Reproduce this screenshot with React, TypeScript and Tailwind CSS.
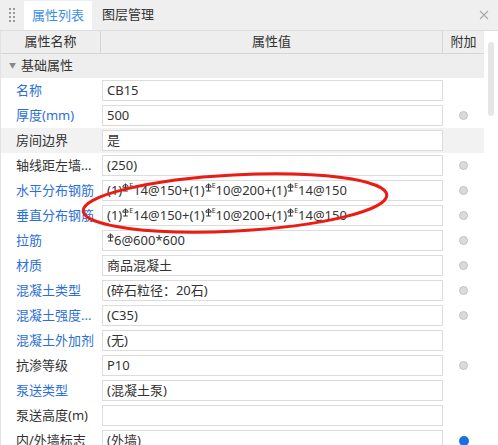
import React from 'react';

type Row = {
  name: string;
  value: React.ReactNode;
  blue?: boolean;
  dot?: 'gray' | 'blue';
  shaded?: boolean;
};

// 三级钢筋符号 (Φ with bar) + E
const Rebar: React.FC<{ e?: boolean }> = ({ e = true }) => (
  <span className="relative -top-[4px] inline-flex items-start">
    <svg width="7" height="9" viewBox="0 0 7 9" className="mt-[1px]">
      <line x1="3.5" y1="0.5" x2="3.5" y2="8" stroke="#333" strokeWidth="1" />
      <path d="M0.8 4.2 A2.7 2.6 0 0 1 6.2 4.2" fill="none" stroke="#333" strokeWidth="1" />
      <line x1="0.8" y1="4.2" x2="6.2" y2="4.2" stroke="#333" strokeWidth="1" />
      <line x1="1.2" y1="8" x2="5.8" y2="8" stroke="#333" strokeWidth="1" />
    </svg>
    {e && <span className="text-[7px] leading-[8px]">E</span>}
  </span>
);

const steel = (
  <>
    (1)<Rebar />14@150+(1)<Rebar />10@200+(1)<Rebar />14@150
  </>
);

const rows: Row[] = [
  { name: '名称', value: 'CB15', blue: true },
  { name: '厚度(mm)', value: '500', blue: true, dot: 'gray' },
  { name: '房间边界', value: '是', shaded: true },
  { name: '轴线距左墙...', value: '(250)', dot: 'gray' },
  { name: '水平分布钢筋', value: steel, blue: true, dot: 'gray' },
  { name: '垂直分布钢筋', value: steel, blue: true, dot: 'gray' },
  { name: '拉筋', value: <><Rebar e={false} />6@600*600</>, blue: true, dot: 'gray' },
  { name: '材质', value: '商品混凝土', blue: true, dot: 'gray' },
  { name: '混凝土类型', value: '(碎石粒径：20石)', blue: true, dot: 'gray' },
  { name: '混凝土强度...', value: '(C35)', blue: true, dot: 'gray' },
  { name: '混凝土外加剂', value: '(无)', blue: true },
  { name: '抗渗等级', value: 'P10', dot: 'gray' },
  { name: '泵送类型', value: '(混凝土泵)', blue: true },
  { name: '泵送高度(m)', value: '' },
  { name: '内/外墙标志', value: '(外墙)', dot: 'blue' },
];

export default function App() {
  return (
    <div
      className="relative w-[498px] h-[445px] overflow-hidden bg-white text-[13px] text-[#333]"
      style={{ fontFamily: '"Noto Sans", "Noto Sans CJK SC", sans-serif' }}
    >
      {/* tabs */}
      <div className="flex h-[31px] bg-[#efefef] border-b border-[#dedede]">
        <div className="w-[24px] flex items-center justify-center">
          <div className="grid grid-cols-2 gap-x-[2px] gap-y-[2px]">
            {Array.from({ length: 8 }).map((_, i) => (
              <span key={i} className="w-[2px] h-[2px] bg-[#9a9a9a]" />
            ))}
          </div>
        </div>
        <div className="mt-[1px] h-[29px] w-[68px] bg-white flex items-center justify-center text-[#3a8ee6]">
          属性列表
        </div>
        <div className="h-[30px] px-[10px] flex items-center">图层管理</div>
        <div className="flex-1" />
        <div className="w-[28px] flex items-center justify-center">
          <svg width="10" height="10" viewBox="0 0 10 10">
            <path d="M1 1L9 9M9 1L1 9" stroke="#a8a8a8" strokeWidth="1.1" />
          </svg>
        </div>
      </div>

      <div className="flex">
        <div className="w-[484px] border-l border-[#e2e2e2]">
          {/* header */}
          <div className="grid grid-cols-[100px_342px_41px] h-[23px] bg-[#eeeeee] border-b border-[#d6d6d6]">
            <div className="flex items-center justify-center border-r border-[#d6d6d6]">属性名称</div>
            <div className="flex items-center justify-center border-r border-[#d6d6d6]">属性值</div>
            <div className="flex items-center justify-center">附加</div>
          </div>
          {/* group */}
          <div className="flex items-center h-[24px] bg-[#eeeeee]">
            <span className="ml-[8px] w-[12px] text-[7px] text-[#888]">▼</span>
            <span>基础属性</span>
          </div>
          {rows.map((r, i) => (
            <div
              key={i}
              className={`grid grid-cols-[100px_342px_41px] h-[25px] items-center ${r.shaded ? 'bg-[#f2f2f2]' : 'bg-white'}`}
            >
              <div className={`pl-[15px] whitespace-nowrap ${r.blue ? 'text-[#2d6fd8]' : 'text-[#333]'}`}>
                {r.name}
              </div>
              <div className="pl-[1px]">
                <div className="h-[21px] w-[341px] border border-[#dcdcdc] bg-white pl-[4px] flex items-center whitespace-nowrap overflow-hidden">
                  {r.value}
                </div>
              </div>
              <div className="flex items-center justify-center">
                {r.dot === 'gray' && (
                  <span className="w-[9px] h-[9px] rounded-full bg-[#dadada] border border-[#c2c2c2]" />
                )}
                {r.dot === 'blue' && <span className="w-[10px] h-[10px] rounded-full bg-[#1a6fe8]" />}
              </div>
            </div>
          ))}
        </div>
        {/* scrollbar */}
        <div className="w-[14px] flex justify-center">
          <div className="mt-[11px] w-[6px] h-[74px] rounded-[3px] bg-[#e6e6e6]" />
        </div>
      </div>

      {/* annotation */}
      <svg className="absolute left-0 top-0 pointer-events-none" width="498" height="445">
        <ellipse
          cx="235"
          cy="203"
          rx="152"
          ry="28"
          transform="rotate(-3 235 203)"
          fill="none"
          stroke="#ea1c14"
          strokeWidth="3"
        />
      </svg>
    </div>
  );
}
